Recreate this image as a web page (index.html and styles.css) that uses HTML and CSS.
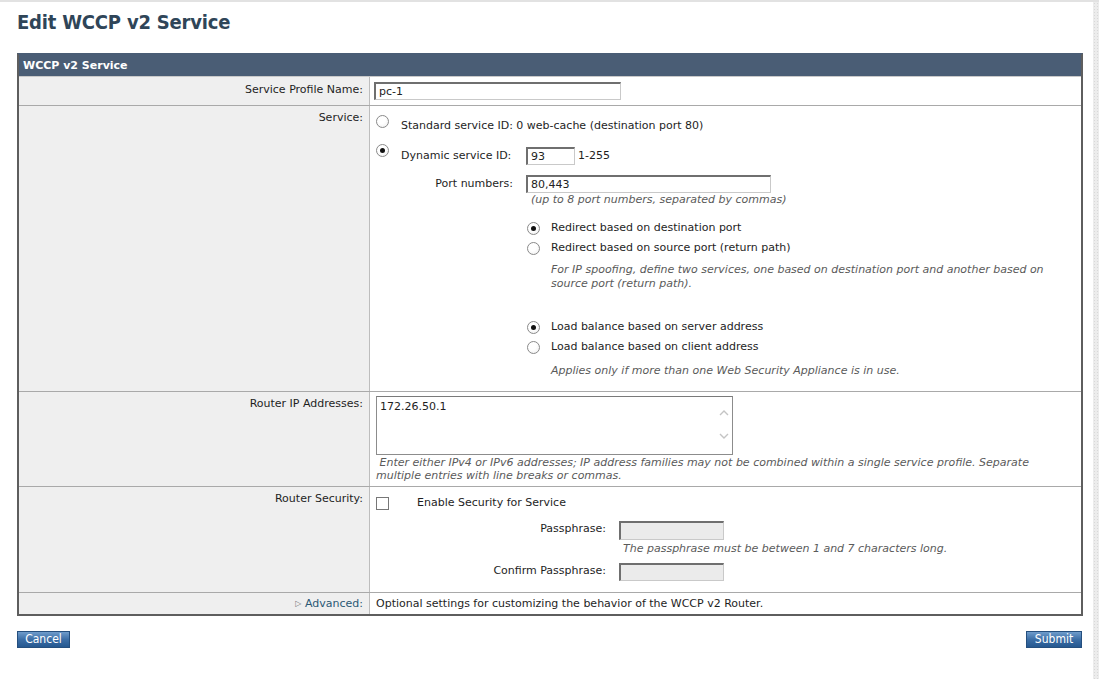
FILE: index.html
```html
<!DOCTYPE html>
<html>
<head>
<meta charset="utf-8">
<title>Edit WCCP v2 Service</title>
<link rel="stylesheet" href="styles.css">
</head>
<body>
<div class="frame">
  <div class="main">
    <h1 class="title">Edit WCCP v2 Service</h1>
    <div class="panel">
      <div class="panel-head">WCCP v2 Service</div>

      <div class="row row-first">
        <div class="lbl lbl-first">Service Profile Name:</div>
        <div class="val val-first"><input class="txt w-name" type="text" value="pc-1"></div>
      </div>

      <div class="row">
        <div class="lbl">Service:</div>
        <div class="val val-svc">
          <div class="line line-std"><span class="radio"></span><span>Standard service ID: 0 web-cache (destination port 80)</span></div>
          <div class="svc-grid">
            <div class="line line-dyn dyn-head"><span class="radio on"></span><span class="dyn-lbl">Dynamic service ID:</span></div>
            <div class="line line-dyn"><input class="txt w-id" type="text" value="93"><span class="range">1-255</span></div>
            <div class="port-lbl">Port numbers:</div>
            <div class="port-col">
              <input class="txt w-port" type="text" value="80,443">
              <div class="hint hint-port">(up to 8 port numbers, separated by commas)</div>
              <div class="subopts">
                <div class="subopt"><span class="radio on"></span>Redirect based on destination port</div>
                <div class="subopt"><span class="radio"></span>Redirect based on source port (return path)</div>
                <div class="hint hint-sub">For IP spoofing, define two services, one based on destination port and another based on source port (return path).</div>
                <div class="subopt subopt-gap"><span class="radio on"></span>Load balance based on server address</div>
                <div class="subopt"><span class="radio"></span>Load balance based on client address</div>
                <div class="hint hint-sub2">Applies only if more than one Web Security Appliance is in use.</div>
              </div>
            </div>
          </div>
        </div>
      </div>

      <div class="row">
        <div class="lbl">Router IP Addresses:</div>
        <div class="val val-ip">
          <div class="textarea">
            <span class="ta-text">172.26.50.1</span>
            <span class="ta-scroll">
              <svg width="10" height="7" viewBox="0 0 10 7"><path d="M1 6 L5 2 L9 6" fill="none" stroke="#c4c4c4" stroke-width="1.4"/></svg>
              <svg width="10" height="7" viewBox="0 0 10 7"><path d="M1 1 L5 5 L9 1" fill="none" stroke="#c4c4c4" stroke-width="1.4"/></svg>
            </span>
          </div>
          <div class="hint hint-ip">&nbsp;Enter either IPv4 or IPv6 addresses; IP address families may not be combined within a single service profile. Separate multiple entries with line breaks or commas.</div>
        </div>
      </div>

      <div class="row">
        <div class="lbl">Router Security:</div>
        <div class="val val-sec">
          <div class="line line-chk"><span class="checkbox"></span><span>Enable Security for Service</span></div>
          <div class="pass-grid">
            <div class="pass-lbl">Passphrase:</div>
            <div><input class="txt txt-off w-pass" type="text" value=""></div>
            <div></div>
            <div class="hint hint-pass">The passphrase must be between 1 and 7 characters long.</div>
            <div class="pass-lbl pass-confirm">Confirm Passphrase:</div>
            <div class="pass-confirm"><input class="txt txt-off w-pass" type="text" value=""></div>
          </div>
        </div>
      </div>

      <div class="row row-last">
        <div class="lbl lbl-adv"><span class="tri">&#9655;</span> <a class="adv" href="#">Advanced:</a></div>
        <div class="val val-adv">Optional settings for customizing the behavior of the WCCP v2 Router.</div>
      </div>
    </div>

    <div class="actions">
      <button class="btn btn-cancel" type="button">Cancel</button>
      <button class="btn btn-submit" type="button">Submit</button>
    </div>
  </div>
  <div class="edge"></div>
</div>
</body>
</html>
```

FILE: styles.css
```css
html, body {
  margin: 0;
  padding: 0;
  background: #ffffff;
}

body {
  font-family: "DejaVu Sans", "Liberation Sans", sans-serif;
  font-size: 11px;
  color: #1e1e1e;
}

.frame {
  display: flex;
  min-height: 679px;
  border-top: 2px solid #e2e2e2;
  box-sizing: border-box;
}

.main {
  flex: 1;
  padding: 0 10px 0 17px;
}

.edge {
  width: 6px;
  background-color: #ececec;
  background-image: radial-gradient(#d8d8d8 0.6px, transparent 0.8px);
  background-size: 3px 3px;
}

.title {
  margin: 0 0 19px 0;
  padding-top: 8px;
  font-family: "DejaVu Sans Condensed", "DejaVu Sans", sans-serif;
  font-size: 20px;
  line-height: 24px;
  font-weight: bold;
  color: #2f4558;
  letter-spacing: -0.2px;
}

.panel {
  border: 2px solid #5e5e5e;
  border-top-color: #4a5d75;
}

.panel-head {
  background: #4a5d75;
  color: #ffffff;
  font-weight: bold;
  height: 21px;
  line-height: 21px;
  padding-left: 4px;
}

.row {
  display: grid;
  grid-template-columns: 351px 1fr;
  border-top: 1px solid #a9a9a9;
}

.row-first {
  border-top-color: #c9c9c9;
}

.lbl {
  background: #efefef;
  border-right: 1px solid #bdbdbd;
  text-align: right;
  padding: 5px 6px 0 0;
  line-height: 14px;
}

.lbl-first {
  padding-top: 6px;
}

.val {
  padding: 5px 6px 0 6px;
  line-height: 14px;
}

/* row 1 */
.val-first {
  padding: 5px 0 5px 4px;
}

.txt {
  box-sizing: border-box;
  height: 18px;
  margin: 0;
  padding: 0 0 0 3px;
  font-family: inherit;
  font-size: 11px;
  color: #222;
  background: #ffffff;
  border-style: solid;
  border-width: 2px 1px 1px 2px;
  border-color: #6f6f6f #c9c9c9 #c9c9c9 #6f6f6f;
  outline: none;
  display: block;
}

.txt-off {
  background: #ebebeb;
  height: 19px;
}

.w-name { width: 247px; }
.w-id { width: 49px; }
.w-port { width: 245px; }
.w-pass { width: 105px; }

/* radios */
.radio {
  box-sizing: border-box;
  display: inline-block;
  flex: none;
  width: 13px;
  height: 13px;
  border-radius: 50%;
  border: 1px solid #8a8a8a;
  background: radial-gradient(circle at 40% 35%, #ffffff 40%, #ececec 100%);
  position: relative;
}

.radio.on::after {
  content: "";
  position: absolute;
  left: 3px;
  top: 3px;
  width: 5px;
  height: 5px;
  border-radius: 50%;
  background: #111111;
}

.checkbox {
  box-sizing: border-box;
  display: inline-block;
  flex: none;
  width: 13px;
  height: 13px;
  border: 1px solid #777777;
  background: #ffffff;
}

/* row 2: service */
.val-svc {
  padding-top: 13px;
  padding-bottom: 13px;
}

.line {
  display: flex;
  align-items: flex-start;
}

.line-std .radio {
  margin: -4px 12px 0 0;
}

.svc-grid {
  display: grid;
  grid-template-columns: 25px 125px 1fr;
  margin-top: 14px;
}

.dyn-head {
  grid-column: 1 / 3;
}

.line-dyn {
  height: 18px;
  align-items: center;
}

.line-dyn .radio {
  align-self: flex-start;
  margin: -3px 12px 0 0;
}

.dyn-lbl {
  line-height: 14px;
}

.range {
  margin-left: 3px;
}

.port-lbl {
  grid-column: 1 / 3;
  text-align: right;
  padding-right: 13px;
  margin-top: 10px;
  line-height: 18px;
}

.port-col {
  margin-top: 10px;
}

.hint {
  font-style: italic;
  color: #5a5a5a;
}

.hint-port {
  padding-left: 5px;
}

.subopts {
  margin-top: 11px;
}

.subopt {
  display: flex;
  align-items: center;
  height: 20px;
}

.subopt .radio {
  margin: 0 11px 0 1px;
}

.subopt-gap {
  margin-top: 26px;
}

.hint-sub {
  margin: 5px 20px 0 25px;
}

.hint-sub2 {
  margin: 7px 0 0 25px;
}

/* row 3 */
.val-ip {
  padding-top: 4px;
  padding-bottom: 4px;
}

.textarea {
  box-sizing: border-box;
  width: 357px;
  height: 59px;
  border: 1px solid #8c8c8c;
  border-top-color: #7a7a7a;
  display: flex;
  justify-content: space-between;
  padding: 3px 0 0 3px;
}

.ta-text {
  line-height: 14px;
}

.ta-scroll {
  width: 16px;
  display: flex;
  flex-direction: column;
  align-items: center;
  gap: 17px;
  padding-top: 9px;
}

.ta-scroll svg {
  display: block;
}

.hint-ip {
  line-height: 13px;
  margin-top: 1px;
  margin-left: 0;
}

/* row 4 */
.val-sec {
  padding-top: 9px;
  padding-bottom: 11px;
}

.line-chk .checkbox {
  margin: 1px 28px 0 0;
}

.pass-grid {
  display: grid;
  grid-template-columns: 230px 1fr;
  column-gap: 13px;
  margin-top: 11px;
}

.pass-lbl {
  text-align: right;
  line-height: 14px;
  padding-top: 1px;
}

.hint-pass {
  padding-left: 4px;
  line-height: 14px;
  margin-top: 2px;
}

.pass-confirm {
  margin-top: 7px;
}

.pass-confirm .txt {
  height: 18px;
}

/* row 5 */
.lbl-adv {
  padding-top: 4px;
  padding-bottom: 3px;
}

.tri {
  color: #777777;
  font-size: 8px;
  vertical-align: 1px;
}

.adv {
  color: #2b5874;
  text-decoration: none;
}

.val-adv {
  padding-top: 4px;
  padding-bottom: 3px;
}

/* buttons */
.actions {
  display: flex;
  justify-content: space-between;
  margin-top: 15px;
  padding-right: 1px;
}

.btn {
  box-sizing: border-box;
  height: 17px;
  padding: 0;
  margin: 0;
  font-family: "DejaVu Sans Condensed", "DejaVu Sans", sans-serif;
  font-size: 12px;
  line-height: 15px;
  color: #ffffff;
  border: 1px solid #254f7e;
  background: linear-gradient(#6f9ccb 0%, #3c6ea6 50%, #255890 100%);
  cursor: pointer;
}

.btn-cancel { width: 53px; }
.btn-submit { width: 56px; }
```
